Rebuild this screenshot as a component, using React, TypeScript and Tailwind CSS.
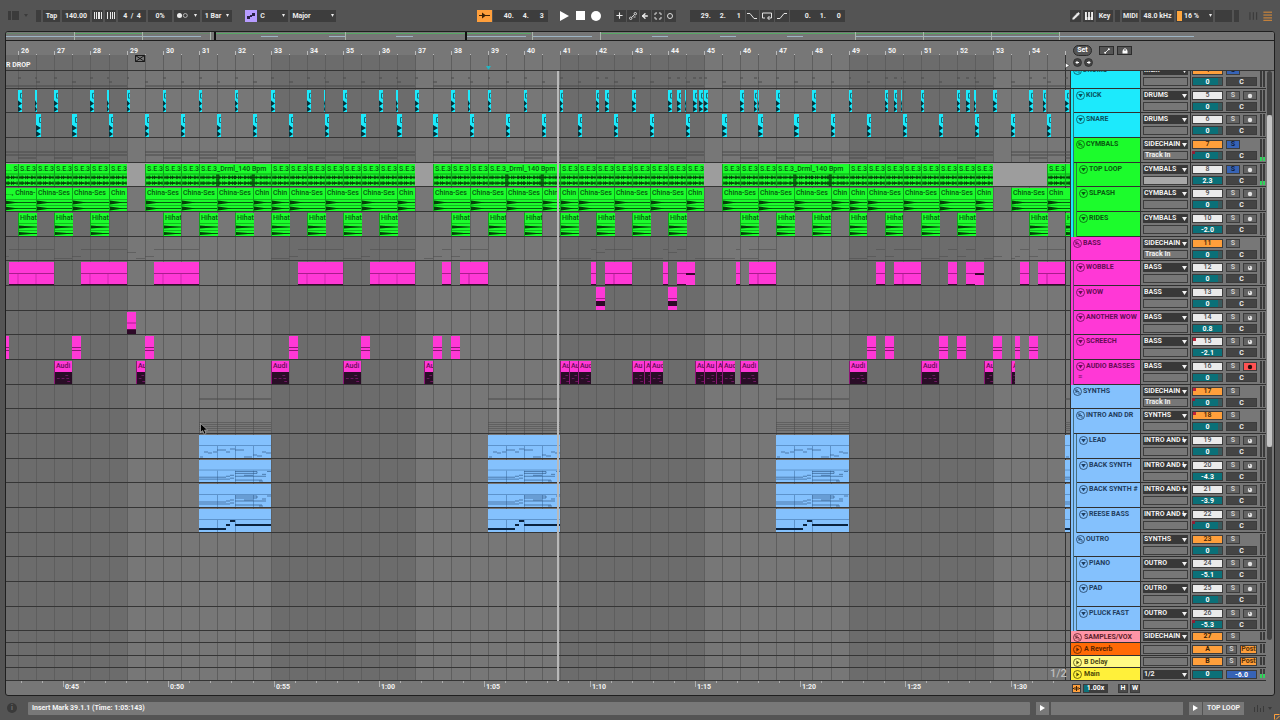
import type { ReactNode } from 'react';
import { Pencil, Piano, Plus, ArrowLeft, Maximize } from 'lucide-react';

type Kind = 'hit' | 'loop' | 'china' | 'hat' | 'midi' | 'wow' | 'screech' | 'audio' | 'lead' | 'chords' | 'reese';
type Clip = { from: number; to: number; kind: Kind; label?: string; high?: boolean; low?: boolean };
type Mark = { from: number; to: number; y: number; h?: number };

type Track = {
  name: string;
  tone: Tone;
  level: number;
  parents?: Tone[];
  group?: boolean;
  out: string;
  input?: string;
  num: string;
  vol: string;
  solo?: boolean;
  rec?: 'audio' | 'midi' | 'armed';
  dots?: boolean;
  volDot?: boolean;
  level2?: boolean;
  clips?: Clip[];
  marks?: Mark[];
};

type Tone = 'cyan' | 'green' | 'pink' | 'blue';

const BAR = 36.1;
const FIRST = 25.66;
const barX = (bar: number) => Math.round((bar - FIRST) * BAR);
const timeX = (sec: number) => Math.round(57 + (sec - 45) * 21.06);
const range = (from: number, to: number, step = 1) =>
  Array.from({ length: Math.round((to - from) / step) + 1 }, (_, i) => from + i * step);

const toneBg: Record<Tone, string> = {
  cyan: 'bg-[#1ceafc]',
  green: 'bg-[#1cfc2c]',
  pink: 'bg-[#ff38d6]',
  blue: 'bg-[#84c1fd]',
};
const toneText: Record<Tone, string> = {
  cyan: 'text-[#08525c]',
  green: 'text-[#07590f]',
  pink: 'text-[#650c54]',
  blue: 'text-[#1f3d5e]',
};

const kicks = [
  26, 27, 28, 29, 30, 31, 32, 33, 34, 35, 36, 37, 38, 39, 40, 41, 42, 42.25, 43, 44, 44.25, 44.69, 44.87, 45, 46, 46.37, 47,
  48, 49, 50, 50.25, 51, 52, 52.25, 53, 54, 54.38, 55,
];
const ghosts = [26.47, 28.47, 34.46, 36.47, 38.46, 44.46, 46.48, 50.44, 52.48];
const snares = range(26.5, 54.5);

const halves = (from: number, to: number): Clip[] =>
  range(from, to - 0.5, 0.5).map((b) => ({ from: b, to: b + 0.5, kind: 'loop', label: 'S.E.3' }));
const longLoop = (from: number): Clip => ({ from, to: from + 2, kind: 'loop', label: 'S.E.3_Drml_140 Bpm' });
const china = (from: number, to: number): Clip => ({ from, to, kind: 'china', label: to - from < 1 ? 'Chin' : 'China-Ses' });
const chinaBlock = (s: number) => [
  china(s, s + 1), china(s + 1, s + 2), china(s + 2, s + 3), china(s + 3, s + 3.5), china(s + 3.5, s + 4),
  china(s + 4, s + 5), china(s + 5, s + 6), china(s + 6, s + 7), china(s + 7, s + 7.5),
];

const clip = (kind: Kind, label?: string) => ([from, to]: number[]): Clip => ({ from, to, kind, label });
// short clips only have room for the start of their name
const audioClip = ([from, to]: number[]): Clip => {
  const len = to - from;
  const label = len >= 0.5 ? 'Audi' : len > 0.34 ? 'Aud' : len > 0.2 ? 'Au' : 'A';
  return { from, to, kind: 'audio', label };
};

const wobbles = [
  [25.75, 27], [27.75, 29], [29.75, 31], [33.75, 35], [35.75, 37], [37.75, 38], [38.25, 39], [41.87, 42], [42.25, 43],
  [43.87, 44], [44.25, 44.5], [45.87, 46], [46.25, 47], [49.75, 50], [50.25, 51], [51.75, 52], [52.25, 52.5],
  [53.75, 54], [54.25, 55],
];
const screeches = [
  [25.6, 25.75], [27.5, 27.75], [29.5, 29.75], [33.5, 33.75], [35.5, 35.75], [37.5, 37.75], [38, 38.25], [49.5, 49.75],
  [50, 50.25], [51.5, 51.75], [52, 52.25], [53, 53.25], [53.62, 53.75], [54, 54.25],
];
const audios = [
  [27, 27.5], [29.25, 29.5], [33, 33.5], [35, 35.5], [37.25, 37.5], [41, 41.25], [41.25, 41.5], [41.5, 41.87],
  [43, 43.33], [43.33, 43.5], [43.5, 43.87], [44.75, 45], [45, 45.33], [45.33, 45.5], [45.5, 45.85], [46, 46.5],
  [49, 49.5], [51, 51.5], [52.75, 53], [53.5, 53.62],
];
const synthSpans = [[31, 33], [39, 41], [47, 49], [55, 57]];
const drumSpans = [[25.6, 29], [29.5, 37], [37.5, 45], [45.5, 53], [53.5, 56]];
const hats = [26, 27, 28, ...range(30, 36), ...range(38, 44), ...range(46, 52), 54, 55];

const spans = (list: number[][], y: number, h = 1): Mark[] => list.map(([from, to]) => ({ from, to, y, h }));

const tracks: Track[] = [
  {
    name: 'DRUMS', tone: 'cyan', level: 0, group: true, out: 'Main', num: '4', vol: '0', solo: true,
    marks: [
      ...kicks.map((b) => ({ from: b, to: b + 0.08, y: 6, h: 2 })),
      ...ghosts.map((b) => ({ from: b, to: b + 0.04, y: 6, h: 2 })),
      ...snares.map((b) => ({ from: b, to: b + 0.1, y: 10, h: 2 })),
      ...spans(drumSpans, 14, 2),
    ],
  },
  {
    name: 'KICK', tone: 'cyan', level: 1, parents: ['cyan'], out: 'DRUMS', num: '5', vol: '0', rec: 'audio',
    clips: [...kicks.map((b) => [b, b + 0.1]), ...ghosts.map((b) => [b, b + 0.04])].map(clip('hit')),
  },
  {
    name: 'SNARE', tone: 'cyan', level: 1, parents: ['cyan'], out: 'DRUMS', num: '6', vol: '0', rec: 'audio',
    clips: snares.map((b) => [b, b + 0.12]).map(clip('hit')),
  },
  {
    name: 'CYMBALS', tone: 'green', level: 1, parents: ['cyan'], group: true, out: 'SIDECHAIN', input: 'Track In', num: '7',
    vol: '0', solo: true, volDot: true, level2: true,
    marks: [...spans(drumSpans, 13, 2), ...spans(drumSpans, 16, 2), ...hats.map((b) => ({ from: b, to: b + 0.5, y: 19, h: 2 }))],
  },
  {
    name: 'TOP LOOP', tone: 'green', level: 2, parents: ['cyan', 'green'], out: 'CYMBALS', num: '8', vol: '2.3', solo: true,
    rec: 'audio', level2: true,
    clips: [
      { from: 25.6, to: 26, kind: 'loop', label: '... S' },
      ...halves(26, 29), ...halves(29.5, 31), longLoop(31), ...halves(33, 37),
      ...halves(37.5, 39), longLoop(39), ...halves(41, 45),
      ...halves(45.5, 47), longLoop(47), ...halves(49, 53), ...halves(54.5, 55),
      { from: 55, to: 56, kind: 'loop' },
    ],
  },
  {
    name: 'SLPASH', tone: 'green', level: 2, parents: ['cyan', 'green'], out: 'CYMBALS', num: '9', vol: '0', rec: 'audio',
    clips: [
      { from: 25.6, to: 26.5, kind: 'china', label: '..., China-' },
      china(26.5, 27.5), china(27.5, 28.5), china(28.5, 29),
      ...chinaBlock(29.5), ...chinaBlock(37.5), ...chinaBlock(45.5), china(53.5, 54.5),
      { from: 54.5, to: 55.5, kind: 'china', label: 'Chin' },
    ],
  },
  {
    name: 'RIDES', tone: 'green', level: 2, parents: ['cyan', 'green'], out: 'CYMBALS', num: '10', vol: '-2.0', rec: 'audio',
    clips: hats.map((b) => ({ from: b, to: b + 0.52, kind: 'hat', label: b < 55 ? 'Hihat' : 'H' })),
  },
  {
    name: 'BASS', tone: 'pink', level: 0, group: true, out: 'SIDECHAIN', input: 'Track In', num: '11', vol: '0',
    marks: [...spans(wobbles, 12), ...spans(screeches, 19), ...spans(audios, 21), ...spans([[29, 29.25], [42, 42.25], [44, 44.25]], 15)],
  },
  {
    name: 'WOBBLE', tone: 'pink', level: 1, parents: ['pink'], out: 'BASS', num: '12', vol: '0', rec: 'midi',
    clips: [
      ...wobbles.map(clip('midi')),
      { from: 44.5, to: 44.75, kind: 'midi', high: true },
      { from: 52.5, to: 52.75, kind: 'midi', high: true },
    ],
  },
  {
    name: 'WOW', tone: 'pink', level: 1, parents: ['pink'], out: 'BASS', num: '13', vol: '0', rec: 'midi',
    clips: [[42, 42.25], [44, 44.25]].map(clip('wow')),
  },
  {
    name: 'ANOTHER WOW', tone: 'pink', level: 1, parents: ['pink'], out: 'BASS', num: '14', vol: '0.8', rec: 'midi',
    clips: [{ from: 29, to: 29.25, kind: 'wow', low: true }],
  },
  {
    name: 'SCREECH', tone: 'pink', level: 1, parents: ['pink'], out: 'BASS', num: '15', vol: '-2.1', rec: 'midi', dots: true,
    clips: screeches.map(clip('screech')),
  },
  {
    name: 'AUDIO BASSES', tone: 'pink', level: 1, parents: ['pink'], out: 'BASS', num: '16', vol: '0', rec: 'armed',
    clips: audios.map(audioClip),
  },
  {
    name: 'SYNTHS', tone: 'blue', level: 0, group: true, out: 'SIDECHAIN', input: 'Track In', num: '17', vol: '0', dots: true,
    volDot: true, marks: spans(synthSpans, 13, 2),
  },
  {
    name: 'INTRO AND DR', tone: 'blue', level: 1, parents: ['blue'], group: true, out: 'SYNTHS', num: '18', vol: '0', dots: true,
    marks: [13, 15, 17, 19, 21].flatMap((y) => spans(synthSpans, y)),
  },
  {
    name: 'LEAD', tone: 'blue', level: 2, parents: ['blue', 'blue'], out: 'INTRO AND I', num: '19', vol: '0', rec: 'midi',
    clips: synthSpans.map(clip('lead')),
  },
  {
    name: 'BACK SYNTH', tone: 'blue', level: 2, parents: ['blue', 'blue'], out: 'INTRO AND I', num: '20', vol: '-4.3', rec: 'midi',
    clips: synthSpans.map(clip('chords')),
  },
  {
    name: 'BACK SYNTH #', tone: 'blue', level: 2, parents: ['blue', 'blue'], out: 'INTRO AND I', num: '21', vol: '-3.9',
    rec: 'midi', clips: synthSpans.map(clip('chords')),
  },
  {
    name: 'REESE BASS', tone: 'blue', level: 2, parents: ['blue', 'blue'], out: 'INTRO AND I', num: '22', vol: '0', rec: 'midi',
    volDot: true, clips: synthSpans.map(clip('reese')),
  },
  { name: 'OUTRO', tone: 'blue', level: 1, parents: ['blue'], group: true, out: 'SYNTHS', num: '23', vol: '0' },
  { name: 'PIANO', tone: 'blue', level: 2, parents: ['blue', 'blue'], out: 'OUTRO', num: '24', vol: '-5.1', rec: 'audio' },
  { name: 'PAD', tone: 'blue', level: 2, parents: ['blue', 'blue'], out: 'OUTRO', num: '25', vol: '0', rec: 'audio' },
  { name: 'PLUCK FAST', tone: 'blue', level: 2, parents: ['blue', 'blue'], out: 'OUTRO', num: '26', vol: '-5.3', rec: 'midi', volDot: true },
];

// the first row is scrolled half out of view, the rest share two heights
const rowHeight = (i: number) => (i === 0 ? 'h-[18px]' : i % 3 === 1 ? 'h-[24px]' : 'h-[25px]');

function wavePath(w: number, mid: number, big: boolean) {
  const amps = [1, 2, 1, 2, 2, 1, 0, 2, 1, 2, 1, 1, 0, 2, 2, 1];
  let d = `M0 ${mid}h${w}`;
  for (let x = 1; x < w; x++) {
    let a = amps[x % 16] * 0.9;
    if (big && Math.abs(x - 18) < 2) a = 3;
    if (big && Math.abs(x - 54) < 2) a = 3;
    d += `M${x} ${mid - a}v${a * 2}`;
  }
  return d;
}

const leadNotes = 'M1 22h3M5 17h4M9 18h4M14 17h4M18 15h9M27 17h4M31 14h5M36 15h9M45 22h8M54 20h4M58 21h5M63 17h4M67 18h5';
const chordNotes = 'M0 18h27M0 20h31M27 17h4M31 16h4M31 19h4M36 12h22M36 14h22M58 12v2M45 16h9M36 17h31M36 21h27M60 22h4M63 15h4M68 12h4';

function ClipArt({ kind, w, high, low }: { kind: Kind; w: number; high?: boolean; low?: boolean }) {
  const svg = (children: ReactNode) => (
    <svg className="absolute inset-0 h-full w-full" viewBox={`0 0 ${w} 23`} preserveAspectRatio="none" aria-hidden="true">
      {children}
    </svg>
  );
  switch (kind) {
    case 'hit':
      return svg(
        <>
          {w > 2 && <path d={`M${w} 3.500h-1.500v5h1.500`} stroke="#0a6f7c" fill="none" />}
          <path d={`M0 11L${w} 14 0 17zM0 17L${w} 20 0 23z`} fill="#05323a" />
          <path d="M0 11v11" stroke="#05323a" strokeOpacity=".5" />
        </>,
      );
    case 'loop':
      return svg(
        <>
          <path d="M0 10.500h200" stroke="#0c9a18" />
          <path d={wavePath(w, 14, w > 40)} stroke="#063f0a" />
          <path d={wavePath(w, 20, w > 40)} stroke="#063f0a" />
        </>,
      );
    case 'china': {
      const tail = Math.min(14, w);
      return svg(
        <>
          <path d={`M0 11.500h${w}M0 17.500h${w}`} stroke="#12b81f" />
          <path d={`M0 14.500h${w}M0 20.500h${w}`} stroke="#075a0e" />
          <path d={`M0 12.500L${tail} 14.500 0 16.500zM0 18.500L${tail} 20.500 0 22.500z`} fill="#063f0a" />
        </>,
      );
    }
    case 'hat':
      return svg(
        <>
          <path d={`M0 10.500h${w}M0 17.500h${w}`} stroke="#12b81f" />
          <path d={`M0 14h${w}M0 20.500h${w}`} stroke="#075a0e" />
          <path d={`M0 12.500L${w} 14 0 15.500zM0 19L${w} 20.500 0 22z`} fill="#063f0a" />
        </>,
      );
    case 'midi':
      return svg(
        <>
          <path d={`M0 11.500h${w}`} stroke="#a81d8c" />
          {w > 20 && <path d={`M9 12v10M${w > 30 ? 27 : 9} 12v10`} stroke="#d02ab0" />}
          <path d={high ? `M0 12h${w}` : `M0 22.500h${w}`} stroke="#3b0730" strokeWidth={high ? 2 : 1} />
        </>,
      );
    case 'wow':
      return svg(
        <>
          <path d={`M0 11.500h${w}`} stroke="#a81d8c" />
          <rect x="0" y={low ? 18 : 14} width={w} height="5" fill="#2e0a28" />
        </>,
      );
    case 'screech':
      return svg(<path d={`M0 11.500h${w}M0 14.500h${w}`} stroke="#8c1575" />);
    case 'audio':
      return svg(
        <>
          <rect x="0" y="11" width={w} height="12" fill="#290d26" />
          <path d={`M${Math.round(w * 0.6)} 14.500h4M2 17.500h${Math.max(w - 5, 1)}M${Math.round(w * 0.7)} 20.500h3`} stroke="#a11f8b" strokeDasharray="3 2" strokeOpacity=".6" />
        </>,
      );
    case 'lead':
    case 'chords':
      return svg(
        <>
          <path d={`M0 10.500h${w}M18.500 11v12M36.500 11v12M54.500 11v12`} stroke="#5d93cb" />
          <path d={kind === 'lead' ? leadNotes : chordNotes} stroke="#2c5480" strokeWidth=".8" strokeOpacity=".8" fill="none" />
        </>,
      );
    default:
      return svg(
        <>
          <path d={`M0 10.500h${w}M18.500 11v12M36.500 11v12`} stroke="#5d93cb" />
          <path d="M0 20h27M27 16h4M31 12h5M36 16h36" stroke="#0a2340" strokeWidth="2" />
        </>,
      );
  }
}

function ClipBox({ clip: c, tone }: { clip: Clip; tone: Tone }) {
  const left = barX(c.from);
  const width = Math.max(barX(c.to) - left, 1);
  const edge = tone === 'green' ? 'border-l border-[#0fa31c]' : c.kind === 'audio' ? 'border-l border-[#8c1575]' : '';
  return (
    <div className={`absolute top-px bottom-0 overflow-hidden ${toneBg[tone]} ${edge}`} style={{ left, width }}>
      <ClipArt kind={c.kind} w={width} high={c.high} low={c.low} />
      {c.label && (
        <span className={`relative block pl-[1px] leading-[11px] font-medium whitespace-nowrap ${toneText[tone]}`}>{c.label}</span>
      )}
    </div>
  );
}

function Lane({ track, index }: { track: Track; index: number }) {
  const selected = track.name === 'TOP LOOP';
  return (
    <div className={`relative border-b border-[#353535] ${rowHeight(index)} ${selected ? 'bg-[#9d9d9d]' : ''}`}>
      {track.marks?.map((m, i) => (
        <div
          key={i}
          className="absolute bg-[#4a4a4a]/50"
          style={{ left: barX(m.from), width: Math.max(barX(m.to) - barX(m.from), 1), top: m.y, height: m.h ?? 1 }}
        />
      ))}
      {track.clips?.map((c, i) => (
        <ClipBox key={i} clip={c} tone={track.tone} />
      ))}
    </div>
  );
}

function Down({ className = 'h-[3px] w-[3px]' }: { className?: string }) {
  return (
    <svg viewBox="0 0 4 4" preserveAspectRatio="none" className={`shrink-0 ${className}`} aria-hidden="true">
      <path d="M0 0h4L2 4z" fill="currentColor" />
    </svg>
  );
}

function Fold({ group }: { group?: boolean }) {
  return (
    <button className="h-[9px] w-[9px] shrink-0" aria-label="Fold track">
      <svg viewBox="0 0 9 9" className="h-full w-full" fill="none" stroke="currentColor" strokeWidth=".8">
        <circle cx="4.5" cy="4.5" r="4" />
        {group ? <path d="M2 3h3M3 4.500h3M4.500 6h2.500M3 3v3" /> : <path d="M2.200 3h4.600L4.500 6.500z" fill="currentColor" stroke="none" />}
      </svg>
    </button>
  );
}

function Routing({ value, label }: { value: string; label: string }) {
  return (
    <div className="relative h-[9px] bg-[#383838] text-[#f2f2f2]">
      <select aria-label={label} className="block h-[9px] w-full appearance-none pr-0 pl-[1px] leading-[9px] outline-none">
        <option>{value}</option>
      </select>
      <Down className="pointer-events-none absolute top-[3px] right-[1px] h-[4px] w-[5px]" />
    </div>
  );
}

function Meter({ on }: { on?: boolean }) {
  return (
    <div className="flex h-full w-[5px] items-stretch gap-[1px] py-[1px]">
      {[0, 1].map((i) => (
        <div key={i} className="flex flex-1 flex-col justify-end bg-[#3a3a3a]">
          {on && <div className="h-[4px] bg-[#2fd45b]" />}
        </div>
      ))}
    </div>
  );
}

const cell = 'block h-[9px] border border-[#3c3c3c] text-center leading-[7px]';

function SoloButton({ on, className = 'w-[14px]' }: { on?: boolean; className?: string }) {
  return (
    <button aria-label="Solo" className={`${cell} ${className} ${on ? 'bg-[#3763b5] text-[#101d38]' : 'bg-[#646464] text-[#d2d2d2]'}`}>
      S
    </button>
  );
}

function Record({ kind }: { kind: NonNullable<Track['rec']> }) {
  return (
    <button
      aria-label="Arm recording"
      className={`flex h-[9px] w-[14px] items-center justify-center border border-[#3c3c3c] ${kind === 'armed' ? 'bg-[#ff5252]' : 'bg-[#646464]'}`}
    >
      <svg viewBox="0 0 6 6" className="h-[6px] w-[6px]">
        <circle cx="3" cy="3" r="2.2" fill={kind === 'armed' ? '#2a0d0d' : '#e3e3e3'} />
        {kind === 'midi' && <path d="M2 1l1.500 1.200L2 3.200z" fill="#555" />}
      </svg>
    </button>
  );
}

function Volume({ value, label, className = 'bg-[#0b7078]' }: { value: string; label: string; className?: string }) {
  return (
    <input aria-label={`${label} volume`} defaultValue={value} className={`${cell} w-[31px] text-white outline-none ${className}`} />
  );
}

function Header({ track: t, index }: { track: Track; index: number }) {
  return (
    <div className={`flex flex-col justify-end overflow-hidden ${rowHeight(index)}`}>
      <div className={`flex shrink-0 ${index === 0 ? 'h-[25px]' : 'h-full'}`}>
        {t.parents?.map((p, i) => (
          <div key={i} className={`w-[3px] shrink-0 border-r border-[#2c4a4a]/70 ${toneBg[p]}`} />
        ))}
        <div className={`min-w-0 flex-1 border-b border-[#303030] ${toneBg[t.tone]} ${toneText[t.tone]}`}>
          <div className="flex items-center gap-[1px] pt-[1px] pl-[2px] leading-[11px] whitespace-nowrap">
            <Fold group={t.group} />
            <span>{t.name}</span>
          </div>
          {t.rec === 'armed' && <div className="pl-[4px] leading-[10px]">≡</div>}
        </div>
        <div className="flex w-[51px] shrink-0 flex-col gap-[2px] border-x border-b border-[#303030] px-[2px] pt-[2px]">
          <Routing value={t.out} label={`${t.name} output`} />
          <div className={`h-[9px] border border-[#3c3c3c] pl-[1px] leading-[7px] text-[#f0f0f0] ${t.name === 'TOP LOOP' ? 'bg-[#a8a8a8]' : ''}`}>
            {t.input}
          </div>
        </div>
        <div className="flex w-[75px] shrink-0 gap-[3px] border-b border-[#303030] pl-[1px]">
          <div className="flex flex-col gap-[2px] pt-[2px]">
            <button
              aria-label={`${t.name} on`}
              className={`${cell} relative w-[31px] font-medium ${t.group ? 'bg-[#ff9f3b] text-[#3b2208]' : 'bg-[#ebebeb] text-[#4a4a4a]'}`}
            >
              {t.dots && <span className="absolute top-0 left-0 h-[3px] w-[3px] bg-[#c0223a]" />}
              {t.num}
            </button>
            <div className="relative">
              <Volume value={t.vol} label={t.name} className={t.vol === '0' ? 'bg-linear-to-r from-[#0b7078] from-86% to-[#3a5a5d] to-86%' : 'bg-[#0b7078]'} />
              {t.volDot && <span className="absolute top-0 left-0 h-[3px] w-[3px] bg-[#8d2035]" />}
            </div>
          </div>
          <div className="flex flex-col gap-[2px] pt-[2px]">
            <div className="flex h-[9px] w-[31px] justify-between">
              <SoloButton on={t.solo} />
              {t.rec && <Record kind={t.rec} />}
            </div>
            <input aria-label={`${t.name} pan`} defaultValue="C" className={`${cell} w-[31px] bg-[#444] text-[#eee] outline-none`} />
          </div>
          <Meter on={t.level2} />
        </div>
      </div>
    </div>
  );
}

type ReturnRow = {
  name: string;
  height: string;
  bg: string;
  out?: string;
  num: string;
  numBg: string;
  kind: 'group' | 'send' | 'main';
};

const returns: ReturnRow[] = [
  { name: 'SAMPLES/VOX', height: 'h-[12px]', bg: 'bg-[#ff94a6] text-[#5e1f2b]', out: 'SIDECHAIN', num: '27', numBg: 'bg-[#ff9f3b] text-[#3b2208]', kind: 'group' },
  { name: 'A Reverb', height: 'h-[13px]', bg: 'bg-[#ff6a05] text-[#5a2300]', num: 'A', numBg: 'bg-[#ff9f3b] text-[#3b2208]', kind: 'send' },
  { name: 'B Delay', height: 'h-[12px]', bg: 'bg-[#fffa85] text-[#4d4a12]', num: 'B', numBg: 'bg-[#ff9f3b] text-[#3b2208]', kind: 'send' },
  { name: 'Main', height: 'h-[13px]', bg: 'bg-[#fff03a] text-[#4d4706]', out: '1/2', num: '0', numBg: 'bg-[#0b7078] text-white', kind: 'main' },
];

function ReturnHeader({ row }: { row: ReturnRow }) {
  return (
    <div className={`flex ${row.height}`}>
      <div className={`flex min-w-0 flex-1 items-center gap-[2px] border-b border-[#303030] pt-px pl-[2px] leading-[9px] whitespace-nowrap ${row.bg}`}>
        {row.kind === 'group' ? (
          <Fold group />
        ) : (
          <button className="h-[9px] w-[9px] shrink-0" aria-label={`Unfold ${row.name}`}>
            <svg viewBox="0 0 9 9" fill="none" stroke="currentColor" strokeWidth=".8">
              <circle cx="4.5" cy="4.5" r="4" />
              <path d="M3.400 2.500v4l3-2z" fill="currentColor" stroke="none" />
            </svg>
          </button>
        )}
        <span>{row.name}</span>
      </div>
      <div className="flex w-[51px] shrink-0 flex-col justify-end border-x border-b border-[#303030] px-[2px] pb-px">
        {row.out ? <Routing value={row.out} label={`${row.name} output`} /> : <div className="h-[9px] border border-[#3c3c3c]" />}
      </div>
      <div className="flex w-[75px] shrink-0 items-end gap-[3px] border-b border-[#303030] pb-px pl-[1px]">
        <button className={`${cell} w-[31px] ${row.numBg}`}>{row.num}</button>
        <div className="flex w-[31px] justify-between">
          {row.kind === 'group' && <SoloButton />}
          {row.kind === 'send' && (
            <>
              <SoloButton className="w-[11px]" />
              <button className={`${cell} w-[17px] bg-[#ff9f3b] text-[#5a3208]`}>Post</button>
            </>
          )}
          {row.kind === 'main' && <Volume value="-6.0" label="Cue" className="bg-[#3763b5]" />}
        </div>
        <Meter on={row.kind === 'main'} />
      </div>
    </div>
  );
}

type BoxProps = { children?: ReactNode; className?: string; tone?: string; label?: string };

function Box({ children, className = '', tone = 'bg-[#3d3d3d]', label }: BoxProps) {
  return (
    <button
      aria-label={label}
      className={`flex h-[12px] shrink-0 items-center justify-center leading-[12px] whitespace-nowrap text-[#ececec] ${tone} ${className}`}
    >
      {children}
    </button>
  );
}

function Position({ parts, label, className = '' }: { parts: string[]; label: string; className?: string }) {
  return (
    <Box label={label} className={`w-[55px] ${className}`}>
      <span className="flex w-full justify-end pr-[4px]">
        {parts.map((p, i) => (
          <span key={i} className="w-[15px] text-right">{p}</span>
        ))}
      </span>
    </Box>
  );
}

function Toolbar() {
  return (
    <header className="flex h-[31px] items-center px-[8px]">
      <div className="flex items-center gap-[2px]">
        <svg viewBox="0 0 21 9" className="mr-[5px] h-[9px] w-[21px]" fill="#3b3b3b">
          <path d="M0 0h3v9H0zM4 0h7v9H4zM16 3h4l-2 3z" />
        </svg>
        <Box label="Nudge" className="w-[5px]" />
        <Box className="w-[17px]">Tap</Box>
        <Box label="Tempo" className="w-[28px]">140.00</Box>
        <Box label="Nudge down" className="w-[11px]">
          <svg viewBox="0 0 8 7" className="h-[7px] w-[8px]" fill="#e8e8e8"><path d="M0 0h1v7H0zM2 0h1v7H2zM4 0h2v7H4zM7 0h1v7H7z" /></svg>
        </Box>
        <Box label="Nudge up" className="w-[11px]">
          <svg viewBox="0 0 8 7" className="h-[7px] w-[8px]" fill="#e8e8e8"><path d="M0 0h1v7H0zM3 0h1v7H3zM5 0h1v7H5zM7 0h1v7H7z" /></svg>
        </Box>
        <Box label="Time signature" className="w-[28px]">4&nbsp; /&nbsp; 4</Box>
        <Box label="Groove amount" className="w-[24px]">0%</Box>
        <Box label="Metronome" className="w-[26px] gap-[6px]">
          <svg viewBox="0 0 11 5" className="h-[5px] w-[11px]"><circle cx="2.5" cy="2.5" r="2.5" fill="#eee" /><circle cx="8.3" cy="2.5" r="2" fill="none" stroke="#ccc" strokeWidth=".8" /></svg>
          <Down />
        </Box>
        <Box label="Quantization" className="w-[30px] gap-[5px]">1 Bar <Down /></Box>
        <Box label="Scale mode" className="ml-[11px] w-[12px]" tone="bg-[#b79cff]">
          <svg viewBox="0 0 8 8" className="h-[8px] w-[8px]" fill="#2a2145"><path d="M0 4h3v3H0zM3 3h2v2H3zM5 1h3v3H5z" /></svg>
        </Box>
        <Box label="Root note" className="-ml-[2px] w-[31px] gap-[17px]">C <Down /></Box>
        <Box label="Scale name" className="w-[46px] gap-[20px]">Major <Down /></Box>
      </div>
      <div className="grow-[5]" />
      <div className="flex items-center gap-[1px]">
        <Box label="Follow" className="w-[15px]" tone="bg-[#ff9f3b]">
          <svg viewBox="0 0 11 7" className="h-[7px] w-[11px]"><path d="M0 3.500h11" stroke="#3b2208" /><path d="M3 .5v6l4-3z" fill="#3b2208" /></svg>
        </Box>
        <Position label="Arrangement position" parts={['40.', '4.', '3']} />
        <button aria-label="Play" className="ml-[11px]"><svg viewBox="0 0 9 10" className="h-[10px] w-[9px]" fill="#fff"><path d="M0 0l9 5-9 5z" /></svg></button>
        <button aria-label="Stop" className="ml-[6px] h-[9px] w-[9px] bg-white" />
        <button aria-label="Record" className="ml-[5px] h-[10px] w-[10px] rounded-full bg-white" />
        <Box label="Overdub" className="ml-[12px] w-[12px]"><Plus size={9} strokeWidth={3} /></Box>
        <Box label="Automation arm" className="w-[12px]">
          <svg viewBox="0 0 8 8" className="h-[8px] w-[8px]" fill="none" stroke="#e4e4e4" strokeWidth=".9"><circle cx="1.7" cy="6.3" r="1.2" /><circle cx="6.3" cy="1.7" r="1.2" /><path d="M2.600 5.400l2.800-2.800M4.500 5h2" /></svg>
        </Box>
        <Box label="Re-enable automation" className="w-[11px]"><ArrowLeft size={8} strokeWidth={4} /></Box>
        <Box label="Capture MIDI" className="w-[12px]"><Maximize size={8} strokeWidth={3} /></Box>
        <Box label="Session record" className="w-[11px]"><span className="h-[6px] w-[6px] rounded-full border border-[#ddd]" /></Box>
        <Position label="Loop start" className="ml-[13px]" parts={['29.', '2.', '1']} />
        <Box label="Punch in" className="w-[13px]"><svg viewBox="0 0 10 6" className="h-[6px] w-[10px]" fill="none" stroke="#e4e4e4"><path d="M0 .5h3l4 5h3" /></svg></Box>
        <Box label="Loop" className="w-[14px]"><svg viewBox="0 0 10 8" className="h-[8px] w-[10px]" fill="none" stroke="#e4e4e4"><path d="M3 6H.5V1h9v5H6M7.500 4L5.500 6l2 2" /></svg></Box>
        <Box label="Punch out" className="w-[14px]"><svg viewBox="0 0 10 6" className="h-[6px] w-[10px]" fill="none" stroke="#e4e4e4"><path d="M0 5.500h3l4-5h3" /></svg></Box>
        <Position label="Loop length" parts={['0.', '1.', '0']} />
      </div>
      <div className="grow-[8]" />
      <div className="flex items-center gap-[2px]">
        <Box label="Draw mode" className="w-[11px]"><Pencil size={8} fill="#eee" strokeWidth={2} /></Box>
        <Box label="Computer MIDI keyboard" className="w-[11px]">
          <svg viewBox="0 0 8 8" className="h-[8px] w-[8px]"><path d="M0 0h8v8H0z" fill="#eee" /><path d="M2.500 0v5M5.500 0v5" stroke="#333" strokeWidth="1.2" /><path d="M2.500 5v3M5.500 5v3" stroke="#333" strokeWidth=".5" /></svg>
        </Box>
        <Box className="w-[17px]">Key</Box>
        <Box label="Key in" className="w-[5px]" />
        <Box className="w-[17px]">MIDI</Box>
        <Box label="Sample rate" className="w-[33px]">48.0 kHz</Box>
        <Box label="CPU load" className="w-[37px] gap-[2px]">
          <span className="h-[10px] w-[5px] bg-[#ffa63c]" />
          <span className="w-[23px] text-left">16 %</span>
          <Down />
        </Box>
        <Box label="Disk" className="w-[17px]" />
        <Box label="MIDI in" className="w-[5px]" />
        <svg viewBox="0 0 24 10" className="ml-[8px] h-[10px] w-[23px]" fill="none">
          <path d="M1 1v8M4.500 1v8M8 1v8" stroke="#363636" />
          <path d="M15 1h9M15 4h9M15 7h9M15 9.500h9" stroke="#e58f35" />
        </svg>
      </div>
    </header>
  );
}

function Overview() {
  const ticks = [68, 136, 204, 339, 526, 594, 849, 917, 985, 1053];
  return (
    <div className="relative h-[9px] overflow-hidden border-b border-[#1f1f1f] bg-[#767676]">
      <svg className="absolute inset-0 h-full w-full" viewBox="0 0 1268 8" preserveAspectRatio="none" aria-hidden="true">
        <path d="M68 1.500h68M210 1.500h315M594 1.500h459" stroke="#58a866" />
        <path d="M0 1.500h68M136 1.500h68" stroke="#66866a" />
        <path d="M0 4.500h195M255 4.500h17M323 4.500h16M390 4.500h17M460 4.500h60M526 4.500h60M646 4.500h16M714 4.500h16M781 4.500h16M849 4.500h339" stroke="#9db4c4" />
        {ticks.map((x) => (
          <path key={x} d={`M${x}.5 0v8`} stroke="#a9b5ab" />
        ))}
        <path d="M209 8V0M460 0v8" stroke="#111" strokeWidth="2" />
      </svg>
    </div>
  );
}

function Timeline() {
  return (
    <div className="flex min-w-0 flex-1 flex-col overflow-hidden">
      <div className="relative h-[14px]">
        {range(26, 55, 0.5).map((b) => (
          <div
            key={b}
            className={`absolute bottom-0 w-px bg-[#b9b9b9] ${b % 1 ? 'h-[1px]' : 'h-[4px]'}`}
            style={{ left: barX(b) }}
          />
        ))}
        {range(26, 54).map((b) => (
          <span key={b} className="absolute top-[6px] leading-[8px] text-[#f3f3f3]" style={{ left: barX(b) + 3 }}>
            {b}
          </span>
        ))}
      </div>
      <div className="relative">
        <div className="pointer-events-none absolute inset-0" aria-hidden="true">
          {[25, 33, 41, 49].map((b) => (
            <div key={b} className="absolute top-0 bottom-0 bg-[#6c6c6c]" style={{ left: barX(b), width: barX(b + 4) - barX(b) }} />
          ))}
          {range(26, 55, 0.5).map((b) => (
            <div
              key={b}
              className={`absolute top-0 bottom-0 w-px ${b === 55 ? 'bg-[#333]' : 'bg-[#5e5e5e]'}`}
              style={{ left: barX(b) }}
            />
          ))}
        </div>
        <div className="relative h-[16px] border-b border-[#353535] text-[#f3f3f3]">
          <span className="block pt-[6px] leading-[9px]">R DROP</span>
          <svg viewBox="0 0 10 7" className="absolute top-0 left-[129px] h-[7px] w-[10px]" fill="none" stroke="#111">
            <path d="M.5 .5h9v6h-9zM.5 .5l9 6M9.500 .5l-9 6" strokeWidth=".9" />
          </svg>
          <svg viewBox="0 0 5 4" className="absolute bottom-0 h-[4px] w-[5px]" style={{ left: barX(39) - 2 }}>
            <path d="M0 0h5L2.500 4z" fill="#25b5c3" />
          </svg>
          <svg viewBox="0 0 5 6" className="absolute bottom-[1px] h-[7px] w-[5px]" style={{ left: barX(55) }}>
            <path d="M.5 .5v5l4-2.500z" fill="#fff" stroke="#222" strokeWidth=".5" />
          </svg>
        </div>
        <div className="relative">
          {tracks.map((t, i) => (
            <Lane key={t.num} track={t} index={i} />
          ))}
          {returns.map((r) => (
            <div key={r.name} className={`border-b border-[#353535] ${r.height}`} />
          ))}
          <div className="absolute top-0 bottom-0 w-[2px] bg-[#b9b9b9]" style={{ left: barX(40.92) }} />
          <span className="absolute right-0 bottom-[2px] w-[20px] overflow-hidden text-[11px] leading-[10px] font-medium whitespace-nowrap text-[#bdbdbd]">
            1/2
          </span>
          <svg viewBox="0 0 8 12" className="absolute top-[352px] h-[12px] w-[8px]" style={{ left: barX(31) + 1 }}>
            <path d="M.5 .5v9l2.200-2 1.500 3.700 1.800-.8-1.500-3.400h3z" fill="#000" stroke="#ddd" strokeWidth=".5" />
          </svg>
        </div>
      </div>
      <div className="relative h-[14px] text-[#f3f3f3]">
        {range(43, 92).map((s) => (
          <div
            key={s}
            className={`absolute top-0 w-px bg-[#b0b0b0] ${s % 5 ? 'h-[2px]' : 'h-[6px]'}`}
            style={{ left: timeX(s) }}
          />
        ))}
        {range(45, 90, 5).map((s) => (
          <span key={s} className="absolute top-[2px] leading-[9px]" style={{ left: timeX(s) + 2 }}>
            {Math.floor(s / 60)}:{String(s % 60).padStart(2, '0')}
          </span>
        ))}
      </div>
    </div>
  );
}

function Mixer() {
  const small = 'flex h-[9px] w-[15px] items-center justify-center border border-[#2c2c2c] bg-[#555] text-white';
  return (
    <div className="flex w-[204px] shrink-0 flex-col">
      <div className="h-[30px] border-b border-[#353535] pl-[3px]">
        <div className="flex items-center pt-[4px]">
          <button className="h-[11px] w-[19px] rounded-full border border-[#2a2a2a] bg-[#555] leading-[9px] text-white">Set</button>
          <button aria-label="Automation mode" className={`ml-[7px] ${small}`}>
            <svg viewBox="0 0 6 6" className="h-[6px] w-[6px]"><circle cx="1.2" cy="4.8" r="1" fill="#fff" /><circle cx="4.8" cy="1.2" r="1" fill="#fff" /><path d="M1 5l4-4" stroke="#fff" strokeWidth=".8" /></svg>
          </button>
          <button aria-label="Lock envelopes" className={`ml-[3px] ${small}`}>
            <svg viewBox="0 0 6 6" className="h-[6px] w-[6px]"><path d="M.5 2.500h5v3h-5z" fill="#fff" /><path d="M1.500 3V1.800Q1.500 .8 3 .8t1.500 1V3" fill="none" stroke="#fff" strokeWidth=".9" /></svg>
          </button>
        </div>
        <div className="flex gap-[2px] pt-[2px]">
          {['M6 4.500H3M4.500 3L3 4.500 4.500 6', 'M3 4.500h3M4.500 3L6 4.500 4.500 6'].map((d, i) => (
            <button key={d} aria-label={i ? 'Next locator' : 'Previous locator'}>
              <svg viewBox="0 0 9 9" className="h-[9px] w-[9px]" fill="none" stroke="#fff"><circle cx="4.5" cy="4.5" r="4" fill="#444" stroke="#2a2a2a" strokeWidth=".7" /><path d={d} /></svg>
            </button>
          ))}
        </div>
      </div>
      <div className="flex border-l border-[#303030]">
        <div className="min-w-0 flex-1">
          {tracks.map((t, i) => (
            <Header key={t.num} track={t} index={i} />
          ))}
          {returns.map((r) => (
            <ReturnHeader key={r.name} row={r} />
          ))}
        </div>
        <div className="flex w-[8px] flex-col pr-[2px] pb-[41px] pl-[1px]">
          <div className="h-[44px] rounded-t bg-[#434343]" />
          <div className="h-[332px] rounded-full bg-[#c6c6c6]" />
          <div className="flex-1 rounded-b bg-[#434343]" />
        </div>
      </div>
      <div className="flex h-[14px] items-center pl-[2px] text-white">
        <button aria-label="Waveform zoom" className="flex h-[9px] w-[9px] items-center justify-center border border-[#3c3c3c] bg-[#ff9f3b]">
          <svg viewBox="0 0 7 7" className="h-[7px] w-[7px]" stroke="#3b2208"><path d="M.5 3v1M2 2v3M3.500 1v5M5 2v3M6.500 3v1" /></svg>
        </button>
        <button className={`${cell} ml-[2px] w-[25px] bg-linear-to-r from-[#0b7078] from-20% to-[#3d3d3d] to-20%`}>1.00x</button>
        <button className={`${cell} ml-[10px] w-[10px] bg-[#4a4a4a]`}>H</button>
        <button className={`${cell} ml-[2px] w-[10px] bg-[#4a4a4a]`}>W</button>
      </div>
    </div>
  );
}

function PlayArrow() {
  return (
    <svg viewBox="0 0 5 6" className="h-[6px] w-[5px]" fill="#fff" aria-hidden="true">
      <path d="M0 0l5 3-5 3z" />
    </svg>
  );
}

function StatusBar() {
  return (
    <footer className="flex h-[24px] items-center pl-[7px] text-[#f3f3f3]">
      <button aria-label="Info" className="flex h-[10px] w-[10px] items-center justify-center rounded-full bg-[#3a3a3a] text-[#707070]">i</button>
      <div className="ml-[11px] h-[13px] flex-1 rounded-[1px] bg-[#787878] pl-[4px] leading-[13px]">Insert Mark 39.1.1 (Time: 1:05:143)</div>
      <button aria-label="Show clip view" className="ml-[6px] flex h-[13px] w-[13px] items-center justify-center bg-[#787878]"><PlayArrow /></button>
      <div className="ml-[2px] h-[13px] w-[132px] bg-[#787878]" />
      <button aria-label="Show device view" className="ml-[6px] flex h-[13px] w-[13px] items-center justify-center bg-[#787878]"><PlayArrow /></button>
      <button className="ml-px h-[13px] w-[41px] bg-[#787878] leading-[13px]">TOP LOOP</button>
      <svg viewBox="0 0 20 9" className="ml-[10px] h-[9px] w-[20px]" fill="#3a3a3a"><path d="M0 3h1v5H0zM3 1h1v7H3zM6 4h1v4H6zM9 2h1v6H9zM14 3h4l-2 3z" /></svg>
      <svg viewBox="0 0 6 6" className="h-[6px] w-[6px] self-end" fill="none" stroke="#ff9f3b"><path d="M5.500 .5h-5v5M2 5.500l3.500-3.500" /></svg>
    </footer>
  );
}

export default function App() {
  return (
    <div className="flex min-h-screen flex-col bg-[#545454] font-['Roboto',sans-serif] text-[7px] leading-none font-bold">
      <Toolbar />
      <main className="mx-[5px] overflow-hidden rounded-[3px] border border-[#1f1f1f] bg-[#777]">
        <Overview />
        <div className="flex">
          <Timeline />
          <Mixer />
        </div>
      </main>
      <StatusBar />
    </div>
  );
}
